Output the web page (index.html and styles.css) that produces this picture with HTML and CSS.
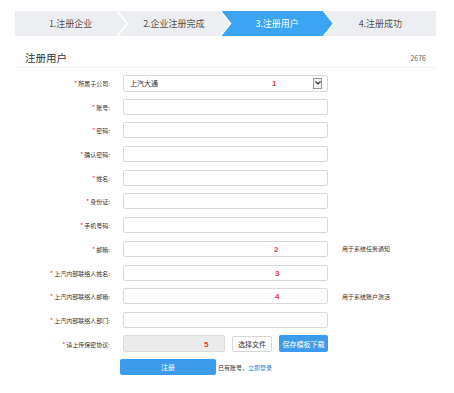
FILE: index.html
```html
<!DOCTYPE html>
<html lang="zh">
<head>
<meta charset="utf-8">
<link rel="stylesheet" href="styles.css">
</head>
<body>
<div class="page">
  <div class="steps">
    <div class="step first">1.注册企业</div>
    <div class="step">2.企业注册完成</div>
    <div class="step active">3.注册用户</div>
    <div class="step last">4.注册成功</div>
  </div>
  <div class="title-bar">
    <span class="title">注册用户</span>
    <span class="count">2676</span>
  </div>
  <div class="form">
    <label class="lbl"><i>*</i>所属子公司:</label>
    <div class="field select"><span class="val">上汽大通</span><span class="mark m1">1</span><span class="arrow"><svg width="6" height="4" viewBox="0 0 6 4"><path d="M0.5 0.5 L3 3 L5.5 0.5" fill="none" stroke="#333" stroke-width="1.2"/></svg></span></div>
    <span></span>

    <label class="lbl"><i>*</i>账号:</label>
    <div class="field"></div>
    <span></span>

    <label class="lbl"><i>*</i>密码:</label>
    <div class="field"></div>
    <span></span>

    <label class="lbl"><i>*</i>确认密码:</label>
    <div class="field"></div>
    <span></span>

    <label class="lbl"><i>*</i>姓名:</label>
    <div class="field"></div>
    <span></span>

    <label class="lbl"><i>*</i>身份证:</label>
    <div class="field"></div>
    <span></span>

    <label class="lbl"><i>*</i>手机号码:</label>
    <div class="field"></div>
    <span></span>

    <label class="lbl"><i>*</i>邮箱:</label>
    <div class="field"><span class="mark m2">2</span></div>
    <span class="note">用于系统任务通知</span>

    <label class="lbl"><i>*</i>上汽内部联络人姓名:</label>
    <div class="field"><span class="mark m3">3</span></div>
    <span></span>

    <label class="lbl"><i>*</i>上汽内部联络人邮箱:</label>
    <div class="field"><span class="mark m3">4</span></div>
    <span class="note">用于系统账户激活</span>

    <label class="lbl"><i>*</i>上汽内部联络人部门:</label>
    <div class="field"></div>
    <span></span>

    <label class="lbl up"><i>*</i>请上传保密协议:</label>
    <div class="upload">
      <div class="filebox"><span class="mark m5">5</span></div>
      <button class="btn-white">选择文件</button>
      <button class="btn-blue">保存模板下载</button>
    </div>
    <span></span>

    <span></span>
    <div class="submit-row">
      <button class="btn-submit">注册</button>
      <span class="login">已有账号，<a>立即登录</a></span>
    </div>
    <span></span>
  </div>
</div>
</body>
</html>
```

FILE: styles.css
```css
* { box-sizing: border-box; }
html, body { margin: 0; padding: 0; background: #fff; }
body {
  font-family: "Noto Sans CJK SC", "Noto Sans", sans-serif;
  color: #333;
  width: 454px;
  height: 393px;
  overflow: hidden;
}
.page { padding: 11px 18px 0 15px; }

.steps { display: flex; height: 25px; }
.step {
  flex: 0 0 111.25px;
  height: 25px;
  margin-left: -8px;
  background: #eceef1;
  color: #555;
  font-size: 9px;
  line-height: 25px;
  text-align: center;
  clip-path: polygon(0 0, calc(100% - 10px) 0, 100% 50%, calc(100% - 10px) 100%, 0 100%, 10px 50%);
}
.step.first {
  margin-left: 0;
  clip-path: polygon(0 0, calc(100% - 10px) 0, 100% 50%, calc(100% - 10px) 100%, 0 100%);
}
.step.last {
  clip-path: polygon(0 0, 100% 0, 100% 100%, 0 100%, 10px 50%);
}
.step.active { background: #3ba4f3; color: #fff; }

.title-bar {
  display: flex;
  justify-content: space-between;
  align-items: center;
  padding: 15px 10px 2px 10px;
  border-bottom: 1px solid #eef0f2;
}
.title { font-size: 10.5px; line-height: 14px; color: #333; }
.count { font-size: 7px; color: #666; line-height: 14px; }

.form {
  display: grid;
  grid-template-columns: 95px 205px 1fr;
  column-gap: 13px;
  row-gap: 7.7px;
  grid-auto-rows: 16px;
  margin-top: 7px;
  align-items: center;
}
.lbl {
  font-size: 6px;
  color: #333;
  text-align: right;
  white-space: nowrap;
}
.lbl i { color: #e33; font-style: normal; font-size: 7px; margin-right: 1px; }
.field {
  position: relative;
  height: 16px;
  border: 1px solid #d9d9d9;
  border-radius: 2px;
  background: #fff;
}
.field.select { height: 17px; display: flex; align-items: center; }
.val { font-size: 7px; padding-left: 6px; color: #333; }
.arrow {
  position: absolute;
  right: 5px;
  top: 2px;
  width: 9px;
  height: 11px;
  border: 1px solid #999;
  background: #f2f2f2;
  display: flex;
  align-items: center;
  justify-content: center;
}
.mark {
  position: absolute;
  top: 50%;
  transform: translateY(-50%);
  font-family: "Liberation Sans", sans-serif;
  font-size: 8px;
  font-weight: bold;
  color: #e03a3a;
}
.m1 { left: 148px; }
.m2 { left: 150px; }
.m3 { left: 151px; }
.m5 { left: 80px; }
.note { font-size: 6px; color: #333; margin-left: 1px; }

.upload { display: flex; gap: 7px; align-items: center; height: 17px; }
.filebox {
  position: relative;
  width: 102px;
  height: 17px;
  background: #ececec;
  border: 1px solid #dcdcdc;
  border-radius: 2px;
}
button { font-family: inherit; margin: 0; cursor: pointer; }
.btn-white {
  width: 40px;
  height: 16px;
  padding: 0;
  background: #fff;
  border: 1px solid #d5d5d5;
  border-radius: 2px;
  font-size: 7px;
  color: #333;
}
.btn-blue {
  width: 49px;
  height: 17px;
  padding: 0;
  background: #3d9bec;
  border: none;
  border-radius: 2px;
  font-size: 7px;
  color: #fff;
}
.submit-row { display: flex; align-items: center; gap: 2px; margin-left: -3px; }
.btn-submit {
  width: 96px;
  height: 16px;
  padding: 0;
  background: #3d9bec;
  border: none;
  border-radius: 2px;
  font-size: 7px;
  color: #fff;
}
.login { font-size: 6px; color: #333; white-space: nowrap; }
.login a { color: #2a7fd4; }
```
